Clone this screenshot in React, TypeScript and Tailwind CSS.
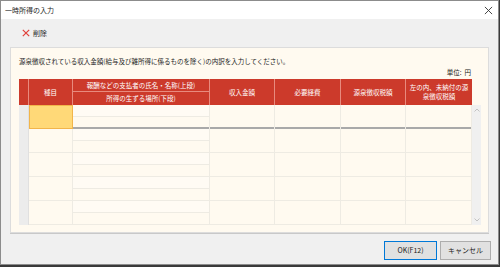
import React from 'react';

const font = { fontFamily: '"Noto Sans CJK JP", "Noto Sans", sans-serif' };

const cols = 'grid grid-cols-[10px_44px_137px_65px_66px_65px_66px]';

const records = [0, 1, 2, 3, 4];

const HeaderCell: React.FC<{ className?: string; children?: React.ReactNode }> = ({ className = '', children }) => (
  <div
    className={`flex items-center justify-center text-center leading-[9px] text-white text-[6.5px] border-r border-[#e88a7e] ${className}`}
  >
    {children}
  </div>
);

export default function App() {
  return (
    <div style={font} className="w-[500px] h-[267px] bg-[#3a3a3a] overflow-hidden">
      <div className="w-[499px] h-[265px] flex flex-col bg-[#f0f0f0] border border-[#8c8c8c]">
        {/* Title bar */}
        <div className="h-[18px] bg-white flex items-center justify-between pl-[4px] pr-[5px] shrink-0">
          <span className="text-[7px] text-[#222]">一時所得の入力</span>
          <svg width="9" height="9" viewBox="0 0 10 10" className="text-[#333]">
            <path d="M1 1 L9 9 M9 1 L1 9" stroke="currentColor" strokeWidth="1" />
          </svg>
        </div>

        {/* Toolbar */}
        <div className="h-[28px] flex items-center pl-[21px] gap-[3px] shrink-0">
          <svg width="8" height="8" viewBox="0 0 8 8">
            <path d="M0.8 0.8 L7.2 7.2 M7.2 0.8 L0.8 7.2" stroke="#e0403a" strokeWidth="1.2" />
          </svg>
          <span className="text-[7px] text-[#222]">削除</span>
        </div>

        {/* Panel */}
        <div className="mx-[9px] h-[186px] bg-[#fffaf0] border border-[#dcdcdc] shadow-[0_1px_0_#c8c8c8] flex flex-col pl-[8px] pr-[7px] shrink-0">
          <div className="h-[18px] flex items-end text-[6.5px] text-[#222] leading-[8px] pb-[1px]">
            源泉徴収されている収入金額(給与及び雑所得に係るものを除く)の内訳を入力してください。
          </div>
          <div className="h-[13px] flex items-center justify-end pr-[10px] text-[6.5px] text-[#222]">
            単位:&nbsp;&nbsp;円
          </div>

          {/* Header */}
          <div className="flex">
            <div className={`${cols} grid-rows-[13px_13px] bg-[#cc3a2b]`}>
              <HeaderCell className="row-span-2" />
              <HeaderCell className="row-span-2">種目</HeaderCell>
              <HeaderCell className="border-b border-b-[#e88a7e]">報酬などの支払者の氏名・名称(上段)</HeaderCell>
              <HeaderCell className="row-span-2">収入金額</HeaderCell>
              <HeaderCell className="row-span-2">必要経費</HeaderCell>
              <HeaderCell className="row-span-2">源泉徴収税額</HeaderCell>
              <HeaderCell className="row-span-2 border-r-0">
                左の内、未納付の源
                <br />
                泉徴収税額
              </HeaderCell>
              <HeaderCell>所得の生ずる場所(下段)</HeaderCell>
            </div>
          </div>

          {/* Body */}
          <div className="flex">
            <div className="flex flex-col">
              {records.map((r) => (
                <div
                  key={r}
                  className={`${cols} grid-rows-[12px_12px] ${
                    r === 0 ? 'border-b-2 border-[#a9a9a9] h-[24px]' : 'border-b border-[#eeebe3] h-[24px]'
                  }`}
                >
                  <div className="row-span-2 bg-[#ececec] border-r border-[#e0e0e0]" />
                  {r === 0 ? (
                    <div className="row-span-2 bg-[#ffd978] border border-[#f2b54a]" />
                  ) : (
                    <div className="row-span-2 border-r border-[#eeebe3]" />
                  )}
                  <div className="border-r border-b border-[#eeebe3] bg-white/30" />
                  <div className="row-span-2 border-r border-[#eeebe3]" />
                  <div className="row-span-2 border-r border-[#eeebe3]" />
                  <div className="row-span-2 border-r border-[#eeebe3]" />
                  <div className="row-span-2 border-r border-[#eeebe3]" />
                  <div className="border-r border-[#eeebe3]" />
                </div>
              ))}
            </div>
            {/* Scrollbar */}
            <div className="w-[10px] h-[120px] bg-[#f0f0f0] flex flex-col justify-between items-center py-[3px]">
              <svg width="6" height="4" viewBox="0 0 6 4">
                <path d="M0.5 3.5 L3 1 L5.5 3.5" stroke="#b5b5b5" fill="none" strokeWidth="0.8" />
              </svg>
              <svg width="6" height="4" viewBox="0 0 6 4">
                <path d="M0.5 0.5 L3 3 L5.5 0.5" stroke="#b5b5b5" fill="none" strokeWidth="0.8" />
              </svg>
            </div>
          </div>
        </div>

        {/* Footer buttons */}
        <div className="flex-1 flex items-center justify-end gap-[3px] pr-[7px] pt-[3px]">
          <button className="w-[53px] h-[19px] bg-[#e1e1e1] border border-[#0078d7] text-[7px] text-[#222] flex items-center justify-center">
            OK(F12)
          </button>
          <button className="w-[51px] h-[19px] bg-[#e1e1e1] border border-[#adadad] text-[7px] text-[#222] flex items-center justify-center">
            キャンセル
          </button>
        </div>
      </div>
    </div>
  );
}
